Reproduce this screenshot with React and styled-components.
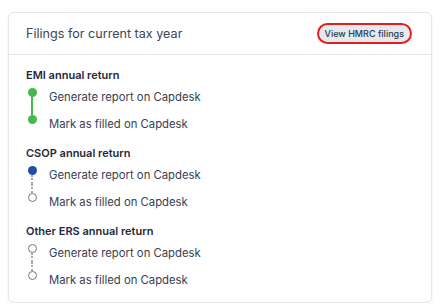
import styled, { createGlobalStyle } from "styled-components";

const GlobalStyle = createGlobalStyle`
  body {
    margin: 0;
    padding: 12px 10px 0 8px;
    background: #ffffff;
    font-family: Inter, "Noto Sans", sans-serif;
    color: #374151;
  }
`;

const sections = [
  {
    title: "EMI annual return",
    steps: [
      { label: "Generate report on Capdesk", status: "done" },
      { label: "Mark as filled on Capdesk", status: "done" },
    ],
  },
  {
    title: "CSOP annual return",
    steps: [
      { label: "Generate report on Capdesk", status: "current" },
      { label: "Mark as filled on Capdesk", status: "pending" },
    ],
  },
  {
    title: "Other ERS annual return",
    steps: [
      { label: "Generate report on Capdesk", status: "pending" },
      { label: "Mark as filled on Capdesk", status: "pending" },
    ],
  },
];

const App = () => {
  return (
    <>
      <GlobalStyle />
      <Card>
        <CardHeader>
          <CardTitle>Filings for current tax year</CardTitle>
          <PillButton>View HMRC filings</PillButton>
        </CardHeader>
        <CardBody>
          {sections.map((section) => (
            <Section key={section.title}>
              <SectionTitle>{section.title}</SectionTitle>
              <StepList>
                {section.steps.map((step, i) => {
                  const prev = section.steps[i - 1];
                  const next = section.steps[i + 1];
                  return (
                    <Step key={step.label}>
                      <Marker>
                        <Segment
                          $visible={!!prev}
                          $solid={prev && prev.status === "done" && step.status === "done"}
                        />
                        <Dot $status={step.status} />
                        <Segment
                          $visible={!!next}
                          $solid={next && next.status === "done" && step.status === "done"}
                        />
                      </Marker>
                      <StepLabel>{step.label}</StepLabel>
                    </Step>
                  );
                })}
              </StepList>
            </Section>
          ))}
        </CardBody>
      </Card>
    </>
  );
};

export default App;

const Card = styled.section`
  width: 424px;
  box-sizing: border-box;
  border: 1px solid #e3e7ec;
  border-radius: 6px;
  background: #ffffff;
  box-shadow: 0 1px 3px rgba(15, 23, 42, 0.07);
`;

const CardHeader = styled.header`
  height: 42px;
  box-sizing: border-box;
  display: flex;
  align-items: center;
  justify-content: space-between;
  padding: 0 19px 0 17px;
  border-bottom: 1px solid #e3e7ec;
`;

const CardTitle = styled.h2`
  margin: 0;
  font-size: 12.6px;
  font-weight: 400;
  color: #3b4656;
`;

const PillButton = styled.button`
  height: 21px;
  padding: 0 6px;
  border: 2px solid #e0201b;
  border-radius: 11px;
  background: #e5e9f0;
  color: #2f3a4a;
  font-family: Inter, "Noto Sans", sans-serif;
  font-size: 9px;
  font-weight: 500;
  cursor: pointer;
`;

const CardBody = styled.div`
  display: flex;
  flex-direction: column;
  gap: 8px;
  padding: 12px 17px 9px;
`;

const Section = styled.div`
  display: flex;
  flex-direction: column;
`;

const SectionTitle = styled.h3`
  margin: 0;
  height: 16px;
  line-height: 16px;
  font-size: 11px;
  font-weight: 600;
  color: #1f2937;
`;

const StepList = styled.ul`
  list-style: none;
  margin: 0;
  padding: 0;
`;

const Step = styled.li`
  display: flex;
  align-items: stretch;
  height: 27px;
  gap: 11px;
`;

const Marker = styled.div`
  width: 12px;
  margin: -4px 0 4px;
  display: flex;
  flex-direction: column;
  align-items: center;
`;

const Segment = styled.span`
  flex: 1;
  width: 0;
  visibility: ${({ $visible }) => ($visible ? "visible" : "hidden")};
  border-left: ${({ $solid }) =>
    $solid ? "2px solid #46b94c" : "2px dotted #a2aab5"};
`;

const dotStyles = {
  done: "background: #46b94c; border: 0; width: 9px; height: 9px;",
  current: "background: #1e4ea6; border: 0; width: 9px; height: 9px;",
  pending:
    "background: #ffffff; border: 1.5px solid #6f7784; width: 9px; height: 9px;",
};

const Dot = styled.span`
  box-sizing: border-box;
  border-radius: 50%;
  flex-shrink: 0;
  ${({ $status }) => dotStyles[$status]}
`;

const StepLabel = styled.span`
  align-self: center;
  font-size: 11.3px;
  color: #374151;
`;
